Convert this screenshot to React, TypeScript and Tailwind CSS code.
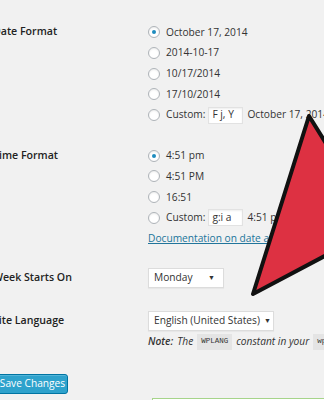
import React from 'react';

const font = { fontFamily: '"Open Sans", "Liberation Sans", sans-serif' };

const Radio = ({ checked }: { checked?: boolean }) => {
  return (
    <span className="w-[12px] h-[12px] rounded-full border border-[#aeb3b8] bg-white shadow-[inset_0_1px_2px_rgba(0,0,0,0.08)] flex items-center justify-center shrink-0">
      {checked && <span className="w-[4px] h-[4px] rounded-full bg-[#1e8cbe]" />}
    </span>
  );
};

const Option = ({ checked, children }: { checked?: boolean; children: React.ReactNode }) => {
  return (
    <div className="h-[20.7px] flex items-center gap-[6px] whitespace-nowrap">
      <Radio checked={checked} />
      {children}
    </div>
  );
};

const Custom = ({ value, preview }: { value: string; preview: string }) => {
  return (
    <Option>
      <span className="flex items-center gap-[3px]">
        <span>Custom:</span>
        <span className="w-[35px] h-[17px] bg-white border border-[#e2e2e2] shadow-[inset_0_1px_2px_rgba(0,0,0,0.07)] px-[3px] flex items-center">
          {value}
        </span>
        <span className="ml-[1px]">{preview}</span>
      </span>
    </Option>
  );
};

const Select = ({ value, width }: { value: string; width: string }) => {
  return (
    <div className={`${width} h-[20px] bg-white border border-[#dcdcdc] shadow-[0_1px_1px_rgba(0,0,0,0.04)] flex items-center justify-between gap-[4px] pl-[5px] pr-[8px] whitespace-nowrap`}>
      <span>{value}</span>
      <span className="text-[7px]">▼</span>
    </div>
  );
};

const Label = ({ children }: { children: React.ReactNode }) => {
  return <div className="w-[155px] shrink-0 font-semibold text-[10.6px] text-[#222]">{children}</div>;
};

const Arrow = () => {
  return (
    <svg className="absolute top-0 left-0" width="324" height="400" viewBox="0 0 324 400">
      <polygon
        points="309,116 370,214 370,232 253,294"
        fill="#dd3142"
        stroke="#111"
        strokeWidth="4"
        strokeLinejoin="round"
      />
    </svg>
  );
};

export default function App() {
  return (
    <div className="relative w-[324px] h-[400px] overflow-hidden bg-[#f1f1f1] text-[10.2px] text-[#333]" style={font}>
      <div className="-ml-[7px] pt-[22px]">
        <div className="flex">
          <Label><div className="h-[20.7px] flex items-center">Date Format</div></Label>
          <div>
            <Option checked>October 17, 2014</Option>
            <Option>2014-10-17</Option>
            <Option>10/17/2014</Option>
            <Option>17/10/2014</Option>
            <Custom value="F j, Y" preview="October 17, 2014" />
          </div>
        </div>

        <div className="flex mt-[20px]">
          <Label><div className="h-[20.7px] flex items-center">Time Format</div></Label>
          <div>
            <Option checked>4:51 pm</Option>
            <Option>4:51 PM</Option>
            <Option>16:51</Option>
            <Custom value="g:i a" preview="4:51 pm" />
            <div className="h-[20.7px] flex items-center whitespace-nowrap">
              <span className="text-[#21759b] underline">Documentation on date and time formatting</span>
            </div>
          </div>
        </div>

        <div className="flex items-center mt-[19px]">
          <Label>Week Starts On</Label>
          <Select value="Monday" width="w-[76px]" />
        </div>

        <div className="flex mt-[23px]">
          <Label><div className="h-[20px] flex items-center">Site Language</div></Label>
          <div className="min-w-0">
            <Select value="English (United States)" width="w-[126px]" />
            <div className="h-[22px] flex items-center gap-[4px] italic whitespace-nowrap">
              <span className="font-semibold">Note:</span>
              <span>The</span>
              <span className="bg-[#e4e4e4] px-[4px] py-[2px] text-[7.5px] not-italic font-mono">WPLANG</span>
              <span>constant in your</span>
              <span className="bg-[#e4e4e4] px-[4px] py-[2px] text-[7.5px] not-italic font-mono">wp-config.php</span>
            </div>
          </div>
        </div>

        <div className="mt-[21px] flex">
          <div className="h-[20px] w-[75px] rounded-[3px] bg-[#2ea2cc] border border-[#0074a2] shadow-[inset_0_1px_0_rgba(120,200,230,0.5)] text-white flex items-center justify-center pl-[4px] text-[10.2px]">
            Save Changes
          </div>
        </div>
      </div>

      <div className="absolute left-[152px] top-[398px] w-[200px] h-[4px] border-t border-l border-[#a6d48a] bg-white" />
      <Arrow />
    </div>
  );
}
